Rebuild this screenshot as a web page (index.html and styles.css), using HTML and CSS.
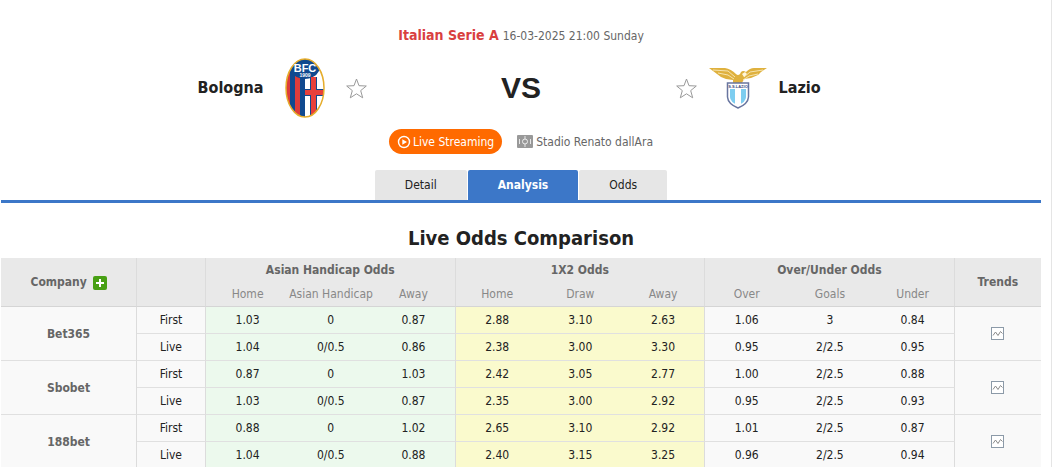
FILE: index.html
```
<!DOCTYPE html>
<html lang="en">
<head>
  <meta charset="UTF-8" />
  <meta name="viewport" content="width=device-width, initial-scale=1.0" />
  <title>Bologna VS Lazio - Live Odds Comparison</title>
  <link rel="stylesheet" href="styles.css">
</head>
<body>
  <svg class="defs" aria-hidden="true">
    <symbol id="star" viewBox="0 0 21 21">
      <path d="M10.500 1 L13 7.700 L20.300 8 L14.700 12.600 L16.700 19.800 L10.500 15.800 L4.300 19.800 L6.300 12.600 L.7 8 L8 7.700 Z" fill="#fff" stroke="#999" stroke-linejoin="round" />
    </symbol>
    <symbol id="chart" viewBox="0 0 14 14">
      <rect x=".5" y=".5" width="12" height="12" fill="#fff" stroke="#8c9aa8" />
      <path d="M2 8.500 L4.500 5 L7 8.500 L9.500 4.500 L11.500 6.500" fill="none" stroke="#8a8a8a" />
    </symbol>
  </svg>

  <div class="page">
    <header class="match">
      <div class="league">
        <a href="#">Italian Serie A</a>
        <span>16-03-2025 21:00 Sunday</span>
      </div>

      <div class="teams">
        <div class="team home">
          <a href="#">Bologna</a>
          <svg class="logo" viewBox="0 0 60 60" role="img" aria-label="Bologna">
            <clipPath id="oval"><ellipse cx="30" cy="30" rx="19" ry="29" /></clipPath>
            <g clip-path="url(#oval)">
              <rect width="60" height="60" fill="#10498f" />
              <rect x="10" y="8" width="5" height="50" fill="#dd3c3a" />
              <rect x="20" y="18" width="5" height="42" fill="#dd3c3a" />
              <rect x="30" y="18" width="20" height="42" fill="#fff" />
              <rect x="35" y="18" width="7" height="42" fill="#10498f" />
              <rect x="30" y="31" width="20" height="7" fill="#10498f" />
              <rect x="36" y="18" width="5" height="42" fill="#e8403b" />
              <rect x="30" y="32" width="20" height="5" fill="#e8403b" />
              <path d="M14 0 H45 V13 Q38 21 30 21 Q21 21 16 14 Z" fill="#10498f" />
              <path d="M44 13 Q42 17 38 19 H50 V11 Z" fill="#fff" />
              <path d="M36 19 h5 v12 h-5 Z" fill="#e8403b" />
            </g>
            <ellipse cx="30" cy="30" rx="19" ry="29" fill="none" stroke="#e6ad2c" stroke-width="1.500" />
            <text class="crest-name" x="30" y="14" text-anchor="middle">BFC</text>
            <text class="crest-year" x="30" y="19" text-anchor="middle">1909</text>
          </svg>
          <button class="fav" type="button" aria-label="Follow Bologna"><svg><use href="#star" /></svg></button>
        </div>
        <div class="vs">VS</div>
        <div class="team away">
          <button class="fav" type="button" aria-label="Follow Lazio"><svg><use href="#star" /></svg></button>
          <svg class="logo" viewBox="0 0 60 60" role="img" aria-label="Lazio">
            <path d="M1 10 L17 10 Q23 11 28 16 Q30 18 32 16 L33 14 Q35 12 38 14 Q42 10 46 10 L59 10 L53 14 L50 17 L43 20 L36 21 L34 25 H25 L25 22 L18 21 L13 19 L9 16 L5 13 Z" fill="#dfb13e" />
            <path d="M5 12 L20 13 L27 19 M10 15 L20 17 L26 21 M55 12 L42 14 L36 19 M50 16 L41 18 L35 22" fill="none" stroke="#f6e4ae" />
            <path d="M34 16 l3 -2 l2 2 l-3 3 Z" fill="#fff6dc" />
            <path d="M19.500 25 H40.500 V39 Q40 46 30 50 Q20 46 19.500 39 Z" fill="#fff" stroke="#68759f" stroke-width="1.500" />
            <path d="M22 31 H38 V39 Q38 44 30 47 Q22 44 22 39 Z" fill="#7dcdf0" />
            <rect x="27" y="31" width="6" height="16" fill="#fff" />
            <text class="crest-band" x="30" y="30" text-anchor="middle">S.S.LAZIO</text>
          </svg>
          <a href="#">Lazio</a>
        </div>
      </div>

      <div class="venue">
        <a class="live" href="#">
          <svg width="14" height="14" viewBox="0 0 14 14">
            <circle cx="7" cy="7" r="5.500" fill="none" stroke="#fff" stroke-width="1.400" />
            <path d="M5.300 4.200 L10 7 L5.300 9.800 Z" fill="#fff" />
          </svg>Live Streaming</a>
        <span class="stadium">
          <svg width="16" height="13" viewBox="0 0 16 13">
            <rect width="16" height="13" rx="1" fill="#999" />
            <path d="M8 1 V4 M8 9 V12 M2.500 4 V9 M13.500 4 V9" stroke="#e6e6e6" />
            <circle cx="8" cy="6.500" r="2.500" fill="none" stroke="#eee" />
          </svg>Stadio Renato dallAra</span>
      </div>

      <nav class="tabs">
        <a href="#">Detail</a>
        <a class="on" href="#">Analysis</a>
        <a href="#">Odds</a>
      </nav>
    </header>

    <h2>Live Odds Comparison</h2>

    <table class="odds">
      <colgroup>
        <col class="c-company"><col class="c-type">
        <col class="c-odd" span="9">
        <col>
      </colgroup>
      <thead>
        <tr>
          <th class="end" rowspan="2">Company <button class="add" type="button" aria-label="Add company"></button></th>
          <th class="end" rowspan="2"></th>
          <th class="group" colspan="3">Asian Handicap Odds</th>
          <th class="group" colspan="3">1X2 Odds</th>
          <th class="group" colspan="3">Over/Under Odds</th>
          <th rowspan="2">Trends</th>
        </tr>
        <tr class="sub">
          <th>Home</th><th>Asian Handicap</th><th class="end">Away</th>
          <th>Home</th><th>Draw</th><th class="end">Away</th>
          <th>Over</th><th>Goals</th><th class="end">Under</th>
        </tr>
      </thead>
      <tbody>
        <tr>
          <th class="end" rowspan="2">Bet365</th>
          <td class="end">First</td>
          <td class="ah">1.03</td><td class="ah">0</td><td class="ah end">0.87</td>
          <td class="x2">2.88</td><td class="x2">3.10</td><td class="x2 end">2.63</td>
          <td>1.06</td><td>3</td><td class="end">0.84</td>
          <td rowspan="2"><a class="trend" href="#" aria-label="Bet365 trends"><svg><use href="#chart" /></svg></a></td>
        </tr>
        <tr>
          <td class="end">Live</td>
          <td class="ah">1.04</td><td class="ah">0/0.5</td><td class="ah end">0.86</td>
          <td class="x2">2.38</td><td class="x2">3.00</td><td class="x2 end">3.30</td>
          <td>0.95</td><td>2/2.5</td><td class="end">0.95</td>
        </tr>
        <tr>
          <th class="end" rowspan="2">Sbobet</th>
          <td class="end">First</td>
          <td class="ah">0.87</td><td class="ah">0</td><td class="ah end">1.03</td>
          <td class="x2">2.42</td><td class="x2">3.05</td><td class="x2 end">2.77</td>
          <td>1.00</td><td>2/2.5</td><td class="end">0.88</td>
          <td rowspan="2"><a class="trend" href="#" aria-label="Sbobet trends"><svg><use href="#chart" /></svg></a></td>
        </tr>
        <tr>
          <td class="end">Live</td>
          <td class="ah">1.03</td><td class="ah">0/0.5</td><td class="ah end">0.87</td>
          <td class="x2">2.35</td><td class="x2">3.00</td><td class="x2 end">2.92</td>
          <td>0.95</td><td>2/2.5</td><td class="end">0.93</td>
        </tr>
        <tr>
          <th class="end" rowspan="2">188bet</th>
          <td class="end">First</td>
          <td class="ah">0.88</td><td class="ah">0</td><td class="ah end">1.02</td>
          <td class="x2">2.65</td><td class="x2">3.10</td><td class="x2 end">2.92</td>
          <td>1.01</td><td>2/2.5</td><td class="end">0.87</td>
          <td rowspan="2"><a class="trend" href="#" aria-label="188bet trends"><svg><use href="#chart" /></svg></a></td>
        </tr>
        <tr>
          <td class="end">Live</td>
          <td class="ah">1.04</td><td class="ah">0/0.5</td><td class="ah end">0.88</td>
          <td class="x2">2.40</td><td class="x2">3.15</td><td class="x2 end">3.25</td>
          <td>0.96</td><td>2/2.5</td><td class="end">0.94</td>
        </tr>
      </tbody>
    </table>
  </div>
</body>
</html>
```
FILE: styles.css
```
* { box-sizing: border-box; }
body {
  margin: 0;
  font-family: Tahoma, "DejaVu Sans Condensed", "Noto Sans", sans-serif;
  font-size: 12px;
  line-height: 16px;
  color: #222;
  background: #fff;
}
a {
  color: inherit;
  text-decoration: none;
}
button {
  padding: 0;
  border: none;
  background: none;
  cursor: pointer;
}
svg {
  display: block;
}
.defs {
  display: none;
}
.page {
  padding: 25px 10px 0 1px;
  border-right: 1px solid #e5e5e5;
}

/* match header */
.match {
  border-bottom: 3px solid #3c77c8;
}
.league {
  display: flex;
  justify-content: center;
  align-items: baseline;
  gap: 4px;
  line-height: 20px;
  color: #666;
}
.league a {
  font-size: 14px;
  font-weight: 700;
  color: #d9403f;
}
.teams {
  display: grid;
  grid-template-columns: 1fr 309px 1fr;
  align-items: center;
  margin-top: 12px;
}
.team {
  display: flex;
  align-items: center;
  gap: 11px;
  font-size: 16px;
  font-weight: 700;
}
.home {
  justify-content: flex-end;
}
.logo {
  width: 60px;
  height: 60px;
}
.crest-name {
  font: 700 11px "Liberation Sans", sans-serif;
  fill: #fff;
}
.crest-year {
  font: 700 5px "Liberation Sans", sans-serif;
  fill: #fff;
}
.crest-band {
  font: 700 4px "Liberation Sans", sans-serif;
  fill: #3d4a80;
}
.fav, .fav svg {
  width: 21px;
  height: 21px;
}
.vs {
  font: 700 30px/32px "Liberation Sans", Arial, sans-serif;
  text-align: center;
}
.venue {
  display: flex;
  justify-content: center;
  align-items: center;
  gap: 15px;
  margin-top: 11px;
  color: #666;
}
.live, .stadium {
  display: flex;
  align-items: center;
}
.live {
  gap: 2px;
  height: 25px;
  padding: 0 8px;
  border-radius: 13px;
  background: #ff6a00;
  color: #fff;
}
.stadium {
  gap: 3px;
}
.tabs {
  display: flex;
  justify-content: center;
  gap: 1px;
  margin-top: 16px;
  line-height: 30px;
}
.tabs a {
  padding: 0 30px;
  border-radius: 2px 2px 0 0;
  background: #e6e6e6;
}
.tabs .on {
  background: #3c77c8;
  color: #fff;
  font-weight: 700;
}

h2 {
  margin: 20px 0 4px;
  font-size: 20px;
  line-height: 31px;
  text-align: center;
}

/* odds table */
.odds {
  width: 100%;
  table-layout: fixed;
  border-collapse: separate;
  border-spacing: 0;
  text-align: center;
  white-space: nowrap;
}
.c-company { width: 136px; }
.c-type { width: 69px; }
.c-odd { width: 8%; }
.odds th, .odds td {
  height: 27px;
  padding: 0;
  border-bottom: 1px solid #e0e0e0;
  background: #f9f9f9;
}
.odds th {
  color: #666;
}
.odds thead th {
  height: 24px;
  border-color: #d5d5d5;
  background: #e9e9e9;
}
.odds .end, .odds .group {
  border-right: 1px solid #dcdcdc;
}
.odds thead .group {
  border-bottom: none;
}
.odds thead .sub th {
  height: 25px;
  font-weight: 400;
  color: #888;
}
.odds .ah { background: #ecf9ed; }
.odds .x2 { background: #fafacd; }
.add {
  position: relative;
  width: 14px;
  height: 14px;
  margin-left: 2px;
  border-radius: 2px;
  background: #48a014;
  vertical-align: middle;
}
.add::before, .add::after {
  content: "";
  position: absolute;
  inset: 6px 3px;
  background: #fff;
}
.add::after {
  inset: 3px 6px;
}
.trend {
  display: inline-block;
  vertical-align: middle;
}
.trend svg {
  width: 14px;
  height: 14px;
}
```
